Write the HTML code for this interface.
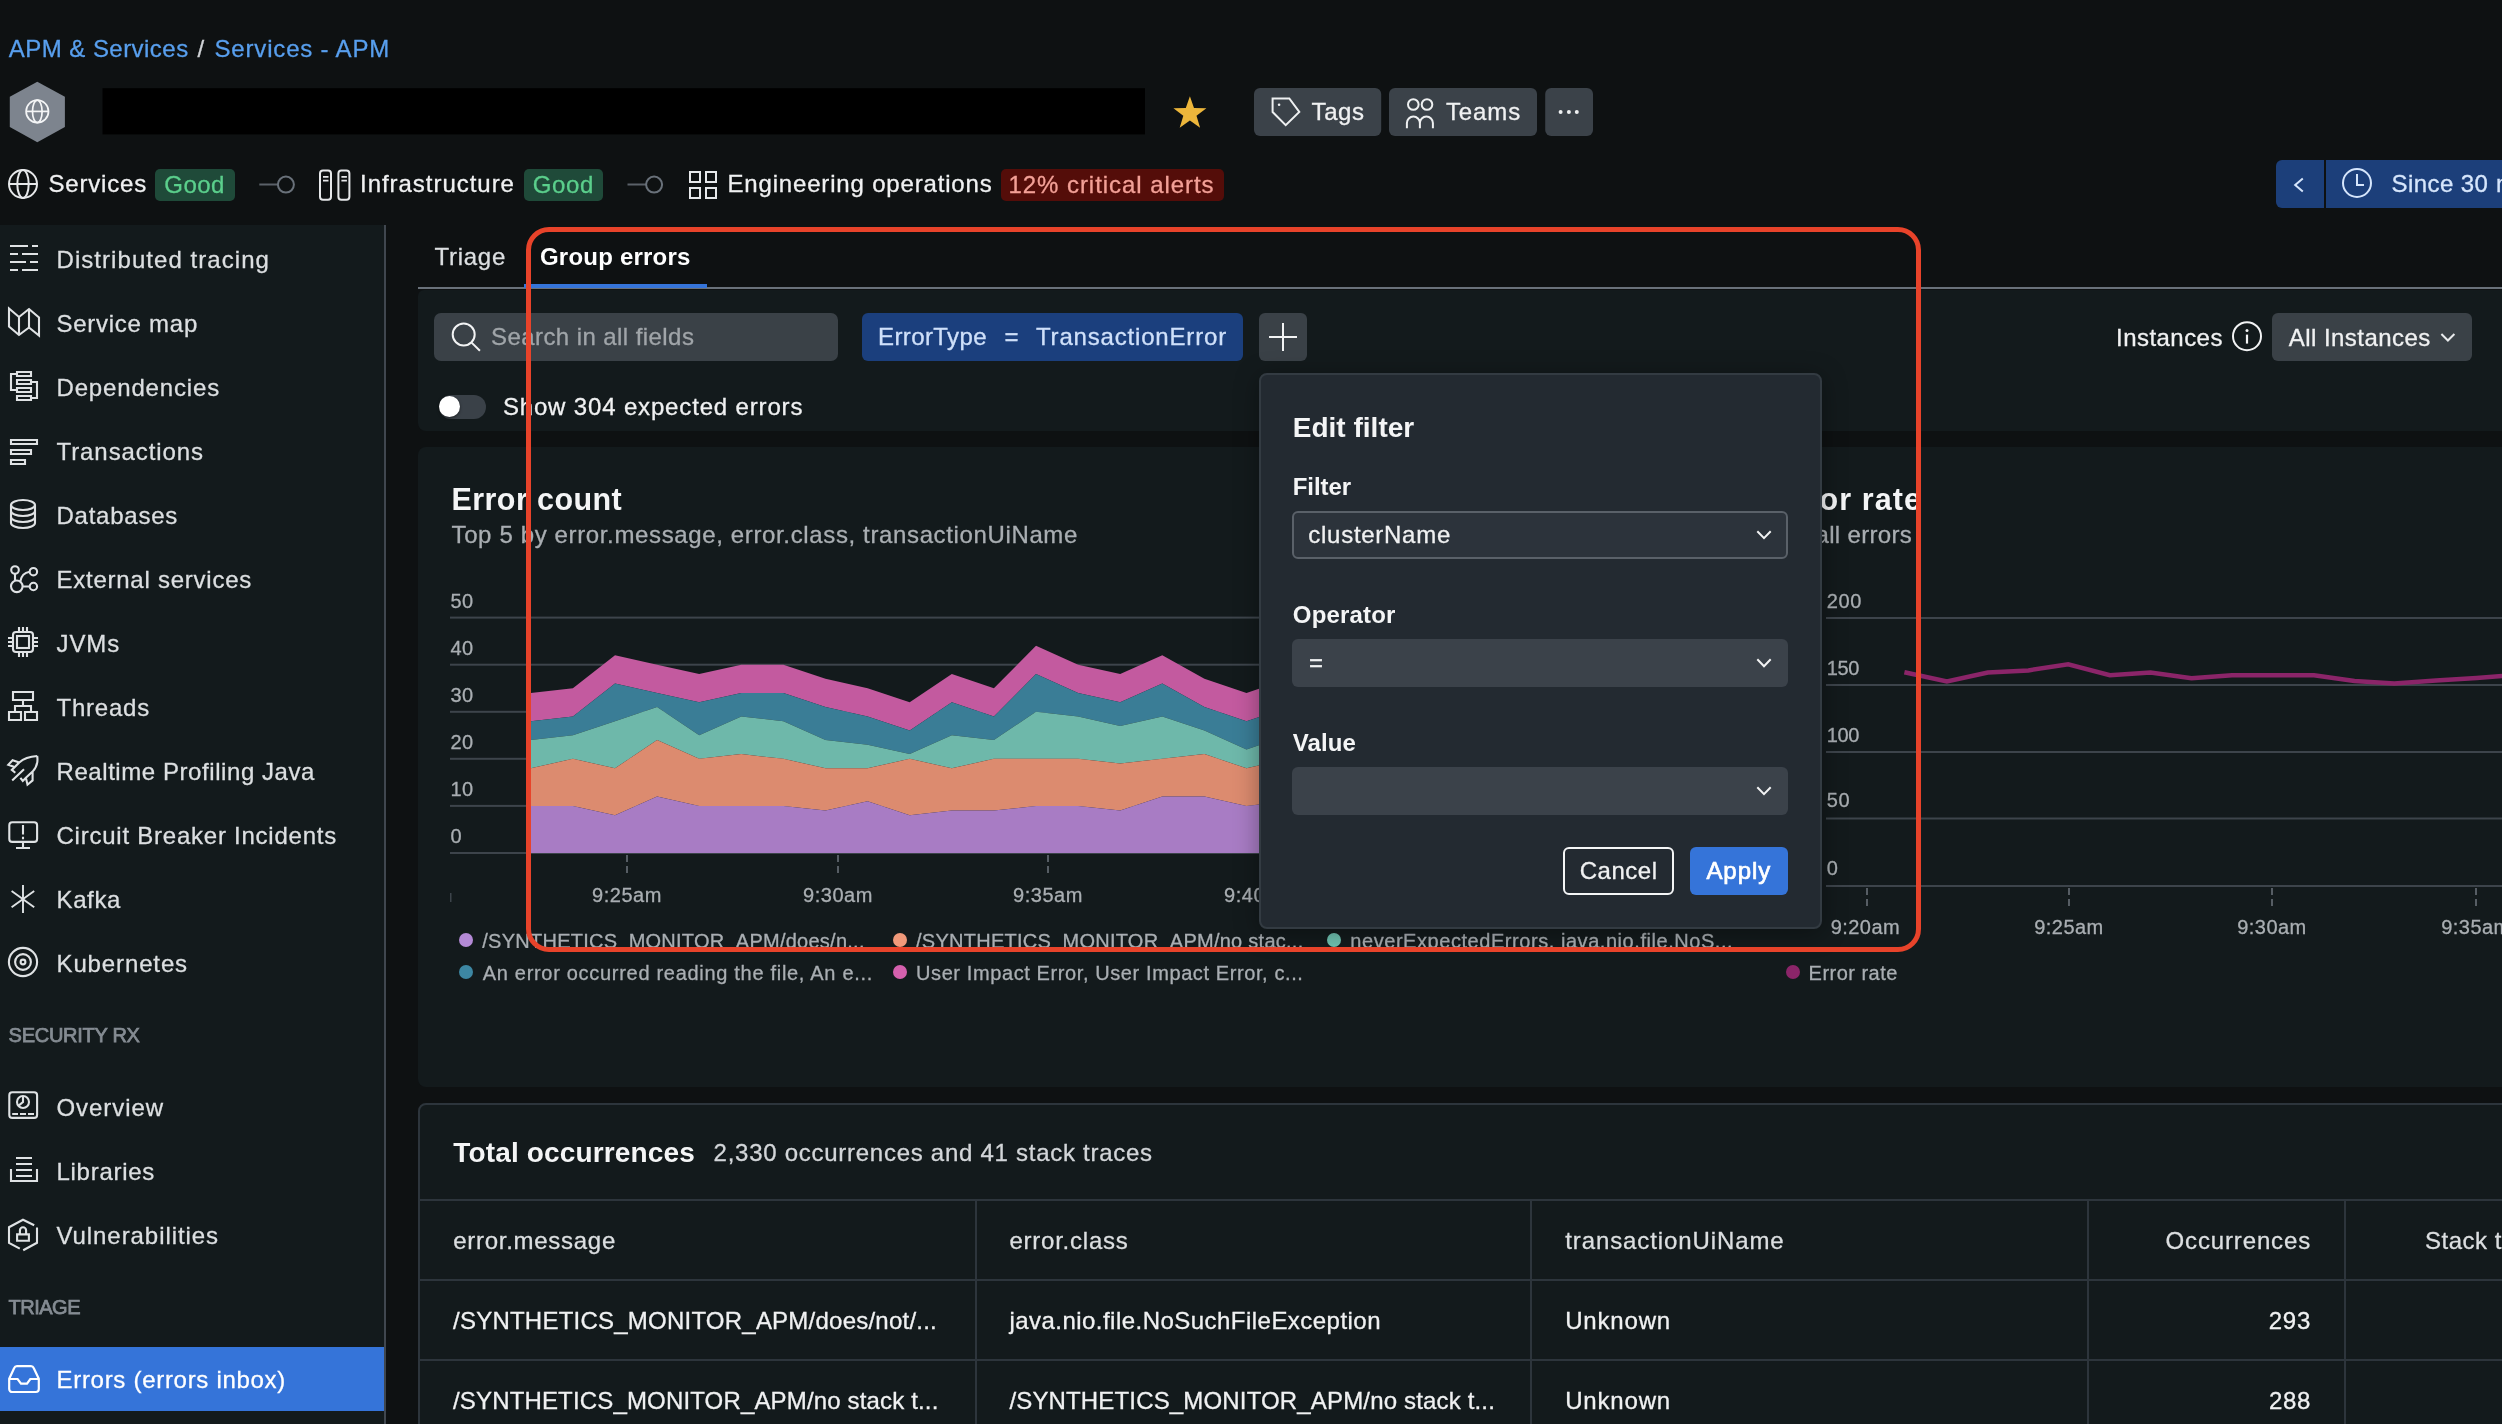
<!DOCTYPE html>
<html lang="en"><head><meta charset="utf-8"><title>Errors inbox - Group errors</title>
<style>
html,body{margin:0;padding:0;background:#0e1112;}
body{width:2502px;height:1424px;overflow:hidden;font-family:"Liberation Sans",sans-serif;}
#page{position:relative;width:2502px;height:1424px;overflow:hidden;background:#0e1112;}
.layer{position:absolute;left:0;top:0;width:2502px;height:1424px;overflow:hidden;will-change:transform;}
#Lmodal,#Ltop{pointer-events:none;}
.t{position:absolute;white-space:pre;display:block;-webkit-text-stroke:0.3px currentColor;-webkit-font-smoothing:antialiased;}
.b{position:absolute;box-sizing:border-box;}
svg{position:absolute;overflow:visible;}
.ic{fill:none;stroke:#e3e5e7;stroke-width:2;}

</style></head>
<body>
<div id="page">
<div class="layer" id="Lbase">
<!-- ===== header ===== -->
<svg style="left:0;top:70px" width="1620" height="80" viewBox="0 70 1620 80">
  <path d="M37.3 81.8 L64.9 96.7 V127 L37.3 142.2 L9.8 127 V96.7 Z" fill="#7d848e"/>
  <g fill="none" stroke="#f4f5f6" stroke-width="1.7"><circle cx="37.3" cy="111.4" r="11.2"/><ellipse cx="37.3" cy="111.4" rx="4.8" ry="11.2"/><path d="M26.1 111.4 H48.5"/></g>
  <rect x="102.5" y="88.2" width="1042.5" height="46.2" fill="#000"/>
  <polygon points="1189.9,96.2 1194.0,108.0 1206.4,108.2 1196.5,115.8 1200.1,127.7 1189.9,120.6 1179.7,127.7 1183.3,115.8 1173.4,108.2 1185.8,108.0" fill="#ecb63b"/>
  <rect x="1254" y="88" width="127.2" height="48" rx="6" fill="#3b4249"/>
  <rect x="1389" y="88" width="148" height="48" rx="6" fill="#3b4249"/>
  <rect x="1545.2" y="88" width="47.8" height="48" rx="6" fill="#3b4249"/>
  <g fill="none" stroke="#eef0f1" stroke-width="2">
    <path d="M1272.6 98.5 H1289.3 L1299.3 112 L1285.7 125.2 L1272.6 112 Z"/>
    <circle cx="1413.3" cy="104.5" r="5.3"/><circle cx="1427" cy="104.5" r="5.3"/>
    <path d="M1406.9 128.3 V123.1 a6.5 6.5 0 0 1 13 0 V128.3 M1419.9 123.1 a6.5 6.5 0 0 1 13 0 V128.3"/>
  </g>
  <g fill="#eef0f1"><circle cx="1279.1" cy="104.8" r="1.3"/><circle cx="1560.6" cy="112" r="2"/><circle cx="1568.9" cy="112" r="2"/><circle cx="1576.8" cy="112" r="2"/></g>
</svg>

<!-- status row -->
<svg style="left:0;top:150px" width="1260" height="70" viewBox="0 150 1260 70" fill="none" stroke="#e6e8ea" stroke-width="2">
  <circle cx="23" cy="184" r="14"/><ellipse cx="23" cy="184" rx="5.7" ry="14"/><path d="M9 184 H37"/>
  <g stroke="#5a6168"><path d="M259.3 184.6 H277.8 M627.5 184.6 H646"/></g>
  <g stroke="#69717a"><circle cx="285.9" cy="184.6" r="8"/><circle cx="654.1" cy="184.6" r="8"/></g>
  <rect x="320" y="170.4" width="11" height="29.3" rx="3"/><rect x="338.4" y="170.4" width="11" height="29.3" rx="3"/>
  <path d="M323 176.8 H328.5 M323 180.6 H328.5 M341.4 176.8 H346.9 M341.4 180.6 H346.9" stroke-width="1.7"/>
  <rect x="690" y="172" width="10" height="10"/><rect x="706" y="172" width="10" height="10"/><rect x="690" y="188" width="10" height="10"/><rect x="706" y="188" width="10" height="10"/>
</svg>
<div class="b" style="left:155px;top:169px;width:80px;height:32px;border-radius:5px;background:#1f4a39"></div>
<div class="b" style="left:524px;top:169px;width:79px;height:32px;border-radius:5px;background:#1f4a39"></div>
<div class="b" style="left:1001px;top:169px;width:223px;height:32px;border-radius:5px;background:#540d09"></div>

<!-- time picker -->
<div class="b" style="left:2276px;top:160px;width:48px;height:48px;border-radius:6px 0 0 6px;background:#1c3f7a"></div>
<div class="b" style="left:2326px;top:160px;width:180px;height:48px;background:#1c3f7a"></div>
<svg style="left:2270px;top:160px" width="232" height="48" viewBox="2270 160 232 48" fill="none" stroke="#d6e6fc" stroke-width="2"><path d="M2302.8 178.6 L2295.2 185 L2302.8 191.4"/><circle cx="2357" cy="183" r="14"/><path d="M2357 174 V185 H2364"/></svg>

<!-- ===== sidebar ===== -->
<div class="b" style="left:0;top:225px;width:384px;height:1200px;background:#131a1c"></div>
<div class="b" style="left:384px;top:225px;width:2px;height:1200px;background:#40474f"></div>
<div class="b" style="left:0;top:1347px;width:384px;height:64px;background:#3574d9"></div>
<svg style="left:0;top:0" width="400" height="1424" viewBox="0 0 400 1424" fill="none" stroke="#dfe2e4" stroke-width="2.1">
<!-- distributed tracing -->
<path d="M10 246 H28 M32 246 H38 M10 254 H18 M22 254 H38 M10 262 H26 M30 262 H38 M10 270 H18 M22 270 H38"/>
<!-- service map -->
<path d="M9 308.5 V326.5 L19 335 L29 327.5 L39 335.5 V317.5 L29 309 L19 317 Z M19 317 V335 M29 309 V327.5" stroke-linejoin="miter"/>
<!-- dependencies -->
<path d="M17 372 H31 V376 H17 Z M17 380 H31 V384 H17 Z M17 388 H31 V392 H17 Z M17 396 H31 V400 H17 Z M17 374 H11 V390 H17 M31 382 H37 V398 H31"/>
<!-- transactions -->
<path d="M11 440 H37 V444 H11 Z M11 450 H31 V454 H11 Z M11 460 H25 V464 H11 Z"/>
<!-- databases -->
<ellipse cx="23" cy="505" rx="12" ry="5"/>
<path d="M11 505 V523 a12 5 0 0 0 24 0 V505 M11 511 a12 5 0 0 0 24 0 M11 517 a12 5 0 0 0 24 0"/>
<!-- external services -->
<circle cx="15" cy="570" r="3.8"/><circle cx="16.8" cy="586.3" r="5.8"/><circle cx="33.4" cy="571.7" r="3.7"/><circle cx="33.4" cy="586.5" r="3.7"/>
<path d="M15 574 V580.5 M22.6 586.5 H29.7 M20.3 581.5 C21 576.5 24.5 572.5 29.7 571.7"/>
<!-- jvms -->
<rect x="13" y="632" width="20" height="20" rx="3"/><rect x="17" y="636" width="12" height="12"/>
<path d="M19 627 V632 M23 627 V632 M27 627 V632 M19 652 V657 M23 652 V657 M27 652 V657 M8 638 H13 M8 642 H13 M8 646 H13 M33 638 H38 M33 642 H38 M33 646 H38"/>
<!-- threads -->
<path d="M13 692 H33 V700 H13 Z M23 700 V706 M15 712 V706 H31 V712 M9 712 H21 V720 H9 Z M25 712 H37 V720 H25 Z"/>
<!-- realtime profiling (rocket) -->
<path d="M37.2 756 C29 756.5 23 759 19.3 762.4 L11.8 769.9 L15.3 772.8 M19.3 762.4 L12.6 760.2 L8.3 764.8 L13.8 766.7 M37.2 756 C38.3 763 36 768 32.6 771.6 L25.9 777.8 L22.8 781 L20.4 777.8 M32.6 771.6 V780.4 L27.5 784.7 L25.9 777.8 M24 769.2 L12.2 780.6"/>
<!-- circuit breaker -->
<rect x="9.3" y="822.3" width="27.8" height="19.6" rx="3"/>
<path d="M23 825 V834.5 M23 836.8 V839.2 M23 842 V848 M16 848 H30"/>
<!-- kafka -->
<path d="M23 885 V913 M11.6 891 L34.2 907.2 M34.2 891 L11.6 907.2" stroke-width="1.9"/>
<!-- kubernetes -->
<circle cx="23" cy="962" r="14.1"/><circle cx="23" cy="962" r="7.9"/><circle cx="23" cy="962" r="2.4"/>
<!-- overview -->
<rect x="9.3" y="1092.2" width="27.8" height="25.7" rx="3"/><circle cx="23" cy="1102" r="6"/>
<path d="M23 1096 V1102 L18.6 1105.6 M12.2 1114 H18 M20 1114 H26 M28 1114 H34"/>
<!-- libraries -->
<path d="M16 1158 H32 M16 1164 H32 M16 1170 H32 M16 1176 H32 M11 1169 V1181 H37 V1169"/>
<!-- vulnerabilities -->
<path d="M34.2 1225.2 L23 1219.8 L9 1227.2 V1242.8 L19.8 1248.7 M37 1227.5 V1242.8 L23.2 1250.2 M17.1 1234.4 H28.9 V1240.7 H17.1 Z M19.9 1234 V1230.4 a3.1 3.1 0 0 1 6.2 0 V1234"/>
<!-- errors inbox -->
<path d="M9.2 1378.8 L14.2 1368 a3 3 0 0 1 2.7 -1.8 H31 a3 3 0 0 1 2.7 1.8 L38.8 1378.8 V1389 a3 3 0 0 1 -3 3 H12.2 a3 3 0 0 1 -3 -3 Z M9.2 1379 H17.6 L21 1383.7 H27 L30.3 1379 H38.8" stroke="#ffffff" stroke-width="2.2"/>
</svg>


<!-- ===== main: tabs ===== -->
<div class="b" style="left:418px;top:287px;width:2090px;height:2px;background:#69717a"></div>
<div class="b" style="left:524px;top:284px;width:183px;height:4px;background:#3574d9"></div>

<!-- filter panel -->
<div class="b" style="left:418px;top:290px;width:2090px;height:141px;border-radius:6px 0 0 8px;background:#131a1c"></div>
<div class="b" style="left:434px;top:313px;width:404px;height:48px;border-radius:7px;background:#3a4147"></div>
<svg style="left:448px;top:320px" width="36" height="36" viewBox="448 320 36 36" fill="none" stroke="#f2f3f4" stroke-width="2"><circle cx="463.7" cy="334.5" r="11"/><path d="M471.6 342.6 L479.9 350.8"/></svg>
<div class="b" style="left:862px;top:313px;width:381px;height:48px;border-radius:6px;background:#1b3f7d"></div>
<div class="b" style="left:1259px;top:313px;width:48px;height:48px;border-radius:6px;background:#3a4147"></div>
<svg style="left:1265px;top:319px" width="36" height="36" viewBox="0 0 36 36"><path d="M18 4 V32 M4 18 H32" stroke="#f2f3f4" stroke-width="2" fill="none"/></svg>
<div class="b" style="left:439px;top:395px;width:47px;height:24px;border-radius:12px;background:#3a4148"></div>
<div class="b" style="left:439.2px;top:396.4px;width:21px;height:21px;border-radius:11px;background:#fff;box-shadow:0 1px 3px rgba(0,0,0,.5)"></div>
<svg style="left:2230px;top:319px" width="34" height="34" viewBox="2230 319 34 34"><circle cx="2247" cy="336.2" r="14" fill="none" stroke="#f2f3f4" stroke-width="2"/><path d="M2247 334.6 V343.6" stroke="#f2f3f4" stroke-width="2.2"/><circle cx="2247" cy="330.6" r="1.5" fill="#f2f3f4"/></svg>
<div class="b" style="left:2272px;top:313px;width:200px;height:48px;border-radius:6px;background:#3a4147"></div>
<svg style="left:2436px;top:328px" width="24" height="18" viewBox="2436 328 24 18"><path d="M2441.4 334 L2447.9 340.5 L2454.4 334" fill="none" stroke="#e8eaec" stroke-width="2"/></svg>

<!-- chart panel -->
<div class="b" style="left:418px;top:447px;width:2090px;height:640px;border-radius:8px 0 0 8px;background:#131a1c"></div>
<svg style="left:0;top:0" width="2502" height="1424" viewBox="0 0 2502 1424">
<rect x="450" y="852.0" width="1330" height="2" fill="#3d444b"/>
<rect x="450" y="804.9" width="1330" height="2" fill="#3d444b"/>
<rect x="450" y="757.8" width="1330" height="2" fill="#3d444b"/>
<rect x="450" y="710.8" width="1330" height="2" fill="#3d444b"/>
<rect x="450" y="663.7" width="1330" height="2" fill="#3d444b"/>
<rect x="450" y="616.6" width="1330" height="2" fill="#3d444b"/>
<polygon points="530.8,692.9 572.9,688.2 615.0,655.3 657.1,664.7 699.2,674.1 741.3,664.7 783.4,664.7 825.5,678.8 867.6,688.2 909.7,702.3 951.8,674.1 993.9,688.2 1036.0,645.8 1078.1,664.7 1120.2,674.1 1162.3,655.3 1204.4,678.8 1246.5,692.9 1288.6,678.8 1330.7,674.1 1372.8,683.5 1372.8,711.8 1330.7,702.3 1288.6,707.1 1246.5,721.2 1204.4,707.1 1162.3,683.5 1120.2,702.3 1078.1,692.9 1036.0,674.1 993.9,716.5 951.8,702.3 909.7,730.6 867.6,716.5 825.5,707.1 783.4,692.9 741.3,692.9 699.2,702.3 657.1,692.9 615.0,683.5 572.9,716.5 530.8,721.2" fill="#c35a9f"/>
<polygon points="530.8,721.2 572.9,716.5 615.0,683.5 657.1,692.9 699.2,702.3 741.3,692.9 783.4,692.9 825.5,707.1 867.6,716.5 909.7,730.6 951.8,702.3 993.9,716.5 1036.0,674.1 1078.1,692.9 1120.2,702.3 1162.3,683.5 1204.4,707.1 1246.5,721.2 1288.6,707.1 1330.7,702.3 1372.8,711.8 1372.8,740.0 1330.7,730.6 1288.6,735.3 1246.5,749.4 1204.4,730.6 1162.3,716.5 1120.2,725.9 1078.1,716.5 1036.0,711.8 993.9,740.0 951.8,735.3 909.7,754.1 867.6,744.7 825.5,740.0 783.4,721.2 741.3,716.5 699.2,735.3 657.1,707.1 615.0,721.2 572.9,735.3 530.8,740.0" fill="#3a7d96"/>
<polygon points="530.8,740.0 572.9,735.3 615.0,721.2 657.1,707.1 699.2,735.3 741.3,716.5 783.4,721.2 825.5,740.0 867.6,744.7 909.7,754.1 951.8,735.3 993.9,740.0 1036.0,711.8 1078.1,716.5 1120.2,725.9 1162.3,716.5 1204.4,730.6 1246.5,749.4 1288.6,735.3 1330.7,730.6 1372.8,740.0 1372.8,758.8 1330.7,763.5 1288.6,758.8 1246.5,768.3 1204.4,754.1 1162.3,758.8 1120.2,763.5 1078.1,758.8 1036.0,758.8 993.9,758.8 951.8,768.3 909.7,758.8 867.6,768.3 825.5,768.3 783.4,758.8 741.3,754.1 699.2,758.8 657.1,740.0 615.0,768.3 572.9,758.8 530.8,768.3" fill="#6eb8aa"/>
<polygon points="530.8,768.3 572.9,758.8 615.0,768.3 657.1,740.0 699.2,758.8 741.3,754.1 783.4,758.8 825.5,768.3 867.6,768.3 909.7,758.8 951.8,768.3 993.9,758.8 1036.0,758.8 1078.1,758.8 1120.2,763.5 1162.3,758.8 1204.4,754.1 1246.5,768.3 1288.6,758.8 1330.7,763.5 1372.8,758.8 1372.8,810.6 1330.7,805.9 1288.6,801.2 1246.5,805.9 1204.4,796.5 1162.3,796.5 1120.2,810.6 1078.1,805.9 1036.0,805.9 993.9,810.6 951.8,810.6 909.7,815.3 867.6,801.2 825.5,810.6 783.4,805.9 741.3,805.9 699.2,805.9 657.1,796.5 615.0,815.3 572.9,805.9 530.8,805.9" fill="#dc8b6f"/>
<polygon points="530.8,805.9 572.9,805.9 615.0,815.3 657.1,796.5 699.2,805.9 741.3,805.9 783.4,805.9 825.5,810.6 867.6,801.2 909.7,815.3 951.8,810.6 993.9,810.6 1036.0,805.9 1078.1,805.9 1120.2,810.6 1162.3,796.5 1204.4,796.5 1246.5,805.9 1288.6,801.2 1330.7,805.9 1372.8,810.6 1372.8,853.0 1330.7,853.0 1288.6,853.0 1246.5,853.0 1204.4,853.0 1162.3,853.0 1120.2,853.0 1078.1,853.0 1036.0,853.0 993.9,853.0 951.8,853.0 909.7,853.0 867.6,853.0 825.5,853.0 783.4,853.0 741.3,853.0 699.2,853.0 657.1,853.0 615.0,853.0 572.9,853.0 530.8,853.0" fill="#a87cc4"/>
<path d="M627 855 V876" stroke="#565d64" stroke-width="2" stroke-dasharray="7 4" fill="none"/>
<path d="M838 855 V876" stroke="#565d64" stroke-width="2" stroke-dasharray="7 4" fill="none"/>
<path d="M1048 855 V876" stroke="#565d64" stroke-width="2" stroke-dasharray="7 4" fill="none"/>
<rect x="450" y="893" width="1.5" height="9" fill="#3d444b"/>
<circle cx="466" cy="940" r="7" fill="#b48ad6"/>
<circle cx="900" cy="940" r="7" fill="#f0997a"/>
<circle cx="1334" cy="940" r="7" fill="#6fc2b1"/>
<circle cx="466" cy="972" r="7" fill="#3d87a3"/>
<circle cx="900" cy="972" r="7" fill="#d460ad"/>
<rect x="1826" y="617" width="700" height="2" fill="#3d444b"/>
<rect x="1826" y="684" width="700" height="2" fill="#3d444b"/>
<rect x="1826" y="751" width="700" height="2" fill="#3d444b"/>
<rect x="1826" y="817.5" width="700" height="2" fill="#3d444b"/>
<rect x="1826" y="885" width="700" height="2" fill="#3d444b"/>
<path d="M1867 888 V909" stroke="#565d64" stroke-width="2" stroke-dasharray="7 4" fill="none"/>
<path d="M2069 888 V909" stroke="#565d64" stroke-width="2" stroke-dasharray="7 4" fill="none"/>
<path d="M2272 888 V909" stroke="#565d64" stroke-width="2" stroke-dasharray="7 4" fill="none"/>
<path d="M2476 888 V909" stroke="#565d64" stroke-width="2" stroke-dasharray="7 4" fill="none"/>
<polyline points="1904.4,672.2 1946.9,681.4 1987.8,672.6 2028.4,670.4 2068.2,664.3 2109.9,675.3 2150.5,672.6 2191.5,678.3 2232,675.3 2273,675.3 2314,675.3 2354.5,681 2394.3,683.6 2436,680.6 2476.6,677.9 2517,675" fill="none" stroke="#8b2569" stroke-width="4.5" stroke-linejoin="miter"/>
<circle cx="1793" cy="972" r="7" fill="#8b2569"/>
</svg>

<!-- table panel -->
<div class="b" style="left:418px;top:1103px;width:2090px;height:340px;border-radius:8px 0 0 0;background:#131a1c;border:2px solid #2d353c"></div>
<div class="b" style="left:420px;top:1199px;width:2090px;height:2px;background:#2d353c"></div>
<div class="b" style="left:420px;top:1279px;width:2090px;height:2px;background:#2d353c"></div>
<div class="b" style="left:420px;top:1359px;width:2090px;height:2px;background:#2d353c"></div>
<div class="b" style="left:975px;top:1200px;width:2px;height:230px;background:#2d353c"></div>
<div class="b" style="left:1530px;top:1200px;width:2px;height:230px;background:#2d353c"></div>
<div class="b" style="left:2087px;top:1200px;width:2px;height:230px;background:#2d353c"></div>
<div class="b" style="left:2344px;top:1200px;width:2px;height:230px;background:#2d353c"></div>

<span class="t" id="t0" style="left:8.8px;top:35px;font-size:24px;line-height:27px;color:#589fee;letter-spacing:0.458px;">APM &amp; Services</span>
<span class="t" id="t1" style="left:197.4px;top:35px;font-size:24px;line-height:27px;color:#d0d3d6;letter-spacing:0.928px;">/</span>
<span class="t" id="t2" style="left:214.5px;top:35px;font-size:24px;line-height:27px;color:#589fee;letter-spacing:0.825px;">Services - APM</span>
<span class="t" id="t3" style="left:1311.6px;top:98px;font-size:24px;line-height:27px;color:#f0f1f2;letter-spacing:0.549px;">Tags</span>
<span class="t" id="t4" style="left:1446px;top:98px;font-size:24px;line-height:27px;color:#f0f1f2;letter-spacing:0.863px;">Teams</span>
<span class="t" id="t5" style="left:48.5px;top:170px;font-size:24px;line-height:27px;color:#f0f1f2;letter-spacing:0.809px;">Services</span>
<span class="t" id="t6" style="left:164.2px;top:171px;font-size:24px;line-height:27px;color:#5bcf8c;letter-spacing:0.520px;">Good</span>
<span class="t" id="t7" style="left:360px;top:170px;font-size:24px;line-height:27px;color:#f0f1f2;letter-spacing:0.965px;">Infrastructure</span>
<span class="t" id="t8" style="left:532.8px;top:171px;font-size:24px;line-height:27px;color:#5bcf8c;letter-spacing:0.595px;">Good</span>
<span class="t" id="t9" style="left:727.5px;top:170px;font-size:24px;line-height:27px;color:#f0f1f2;letter-spacing:0.825px;">Engineering operations</span>
<span class="t" id="t10" style="left:1008.5px;top:171px;font-size:24px;line-height:27px;color:#f3a097;letter-spacing:0.944px;">12% critical alerts</span>
<span class="t" id="t11" style="left:2391.5px;top:170px;font-size:24px;line-height:27px;color:#d6e6fc;letter-spacing:0.437px;">Since 30</span>
<span class="t" id="t12" style="left:2496px;top:170px;font-size:24px;line-height:27px;color:#d6e6fc;letter-spacing:0.900px;">minutes ago</span>
<span class="t" id="t13" style="left:56.5px;top:246px;font-size:24px;line-height:27px;color:#dcdfe1;letter-spacing:1.057px;">Distributed tracing</span>
<span class="t" id="t14" style="left:56.5px;top:310px;font-size:24px;line-height:27px;color:#dcdfe1;letter-spacing:0.737px;">Service map</span>
<span class="t" id="t15" style="left:56.5px;top:374px;font-size:24px;line-height:27px;color:#dcdfe1;letter-spacing:0.837px;">Dependencies</span>
<span class="t" id="t16" style="left:56.5px;top:438px;font-size:24px;line-height:27px;color:#dcdfe1;letter-spacing:0.917px;">Transactions</span>
<span class="t" id="t17" style="left:56.5px;top:502px;font-size:24px;line-height:27px;color:#dcdfe1;letter-spacing:0.750px;">Databases</span>
<span class="t" id="t18" style="left:56.5px;top:566px;font-size:24px;line-height:27px;color:#dcdfe1;letter-spacing:0.751px;">External services</span>
<span class="t" id="t19" style="left:56.5px;top:630px;font-size:24px;line-height:27px;color:#dcdfe1;letter-spacing:0.875px;">JVMs</span>
<span class="t" id="t20" style="left:56.5px;top:694px;font-size:24px;line-height:27px;color:#dcdfe1;letter-spacing:0.779px;">Threads</span>
<span class="t" id="t21" style="left:56.5px;top:758px;font-size:24px;line-height:27px;color:#dcdfe1;letter-spacing:0.568px;">Realtime Profiling Java</span>
<span class="t" id="t22" style="left:56.5px;top:822px;font-size:24px;line-height:27px;color:#dcdfe1;letter-spacing:0.762px;">Circuit Breaker Incidents</span>
<span class="t" id="t23" style="left:56.5px;top:886px;font-size:24px;line-height:27px;color:#dcdfe1;letter-spacing:0.625px;">Kafka</span>
<span class="t" id="t24" style="left:56.5px;top:950px;font-size:24px;line-height:27px;color:#dcdfe1;letter-spacing:0.873px;">Kubernetes</span>
<span class="t" id="t25" style="left:56.5px;top:1094px;font-size:24px;line-height:27px;color:#dcdfe1;letter-spacing:0.934px;">Overview</span>
<span class="t" id="t26" style="left:56.5px;top:1158px;font-size:24px;line-height:27px;color:#dcdfe1;letter-spacing:0.717px;">Libraries</span>
<span class="t" id="t27" style="left:56.5px;top:1222px;font-size:24px;line-height:27px;color:#dcdfe1;letter-spacing:0.931px;">Vulnerabilities</span>
<span class="t" id="t28" style="left:8.6px;top:1024px;font-size:20px;line-height:22px;color:#858c93;letter-spacing:-0.274px;-webkit-text-stroke-width:0.75px;">SECURITY RX</span>
<span class="t" id="t29" style="left:8.6px;top:1296px;font-size:20px;line-height:22px;color:#858c93;letter-spacing:-0.509px;-webkit-text-stroke-width:0.75px;">TRIAGE</span>
<span class="t" id="t30" style="left:56.5px;top:1366px;font-size:24px;line-height:27px;color:#ffffff;letter-spacing:0.705px;">Errors (errors inbox)</span>
<span class="t" id="t31" style="left:434.5px;top:243px;font-size:24px;line-height:27px;color:#dcdfe1;letter-spacing:0.727px;">Triage</span>
<span class="t" id="t32" style="left:540px;top:243px;font-size:24px;line-height:27px;color:#ffffff;font-weight:700;-webkit-text-stroke-width:0;letter-spacing:0.206px;">Group errors</span>
<span class="t" id="t33" style="left:491px;top:323px;font-size:24px;line-height:27px;color:#a0a5a9;letter-spacing:0.427px;">Search in all fields</span>
<span class="t" id="t34" style="left:878px;top:323px;font-size:24px;line-height:27px;color:#cfe0fa;letter-spacing:0.403px;">ErrorType</span>
<span class="t" id="t35" style="left:1004.5px;top:323px;font-size:24px;line-height:27px;color:#cfe0fa;letter-spacing:0.000px;">=</span>
<span class="t" id="t36" style="left:1036px;top:323px;font-size:24px;line-height:27px;color:#cfe0fa;letter-spacing:0.822px;">TransactionError</span>
<span class="t" id="t37" style="left:502.9px;top:393px;font-size:24px;line-height:27px;color:#f0f1f2;letter-spacing:0.843px;">Show 304 expected errors</span>
<span class="t" id="t38" style="left:2116px;top:324px;font-size:24px;line-height:27px;color:#f0f1f2;letter-spacing:0.463px;">Instances</span>
<span class="t" id="t39" style="left:2288.8px;top:324px;font-size:24px;line-height:27px;color:#f0f1f2;letter-spacing:0.448px;">All Instances</span>
<span class="t" id="t40" style="left:451.5px;top:482px;font-size:30.5px;line-height:34px;color:#f4f5f6;font-weight:700;-webkit-text-stroke-width:0;letter-spacing:0.420px;">Error count</span>
<span class="t" id="t41" style="left:451.5px;top:521px;font-size:24px;line-height:27px;color:#a9aeb2;letter-spacing:0.634px;">Top 5 by error.message, error.class, transactionUiName</span>
<span class="t" id="t42" style="left:450.6px;top:590px;font-size:20px;line-height:22px;color:#a9aeb2;letter-spacing:0.375px;">50</span>
<span class="t" id="t43" style="left:450.6px;top:637px;font-size:20px;line-height:22px;color:#a9aeb2;letter-spacing:0.375px;">40</span>
<span class="t" id="t44" style="left:450.6px;top:684px;font-size:20px;line-height:22px;color:#a9aeb2;letter-spacing:0.375px;">30</span>
<span class="t" id="t45" style="left:450.6px;top:731px;font-size:20px;line-height:22px;color:#a9aeb2;letter-spacing:0.375px;">20</span>
<span class="t" id="t46" style="left:450.6px;top:778px;font-size:20px;line-height:22px;color:#a9aeb2;letter-spacing:0.375px;">10</span>
<span class="t" id="t47" style="left:450.6px;top:825px;font-size:20px;line-height:22px;color:#a9aeb2;letter-spacing:0.375px;">0</span>
<span class="t" id="t48" style="left:592px;top:884px;font-size:20px;line-height:22px;color:#a9aeb2;letter-spacing:0.547px;">9:25am</span>
<span class="t" id="t49" style="left:803px;top:884px;font-size:20px;line-height:22px;color:#a9aeb2;letter-spacing:0.547px;">9:30am</span>
<span class="t" id="t50" style="left:1013px;top:884px;font-size:20px;line-height:22px;color:#a9aeb2;letter-spacing:0.547px;">9:35am</span>
<span class="t" id="t51" style="left:1224px;top:884px;font-size:20px;line-height:22px;color:#a9aeb2;letter-spacing:0.547px;">9:40am</span>
<span class="t" id="t52" style="left:482.3px;top:930px;font-size:20px;line-height:22px;color:#a9aeb2;letter-spacing:0.249px;height:18px;overflow:hidden;">/SYNTHETICS_MONITOR_APM/does/n...</span>
<span class="t" id="t53" style="left:916px;top:930px;font-size:20px;line-height:22px;color:#a9aeb2;letter-spacing:0.261px;height:18px;overflow:hidden;">/SYNTHETICS_MONITOR_APM/no stac...</span>
<span class="t" id="t54" style="left:1350.3px;top:930px;font-size:20px;line-height:22px;color:#a9aeb2;letter-spacing:0.554px;height:18px;overflow:hidden;">neverExpectedErrors, java.nio.file.NoS...</span>
<span class="t" id="t55" style="left:482.7px;top:962px;font-size:20px;line-height:22px;color:#a9aeb2;letter-spacing:0.700px;">An error occurred reading the file, An e...</span>
<span class="t" id="t56" style="left:916px;top:962px;font-size:20px;line-height:22px;color:#a9aeb2;letter-spacing:0.600px;">User Impact Error, User Impact Error, c...</span>
<span class="t" id="t57" style="left:1771px;top:482px;font-size:30.5px;line-height:34px;color:#f4f5f6;font-weight:700;-webkit-text-stroke-width:0;letter-spacing:0.969px;">Err</span>
<span class="t" id="t58" style="left:1819.5px;top:482px;font-size:30.5px;line-height:34px;color:#f4f5f6;font-weight:700;-webkit-text-stroke-width:0;letter-spacing:1.080px;width:96.5px;overflow:hidden;">or rate</span>
<span class="t" id="t59" style="left:1736px;top:521px;font-size:24px;line-height:27px;color:#a9aeb2;letter-spacing:-0.227px;">Across</span>
<span class="t" id="t60" style="left:1815.5px;top:521px;font-size:24px;line-height:27px;color:#a9aeb2;letter-spacing:0.334px;">all errors</span>
<span class="t" id="t61" style="left:1826.7px;top:590px;font-size:20px;line-height:22px;color:#a9aeb2;letter-spacing:0.675px;">200</span>
<span class="t" id="t62" style="left:1826.7px;top:657px;font-size:20px;line-height:22px;color:#a9aeb2;letter-spacing:-0.325px;">150</span>
<span class="t" id="t63" style="left:1826.7px;top:724px;font-size:20px;line-height:22px;color:#a9aeb2;letter-spacing:-0.392px;">100</span>
<span class="t" id="t64" style="left:1826.7px;top:789px;font-size:20px;line-height:22px;color:#a9aeb2;letter-spacing:0.675px;">50</span>
<span class="t" id="t65" style="left:1826.7px;top:857px;font-size:20px;line-height:22px;color:#a9aeb2;letter-spacing:0.175px;">0</span>
<span class="t" id="t66" style="left:1830.7px;top:916px;font-size:20px;line-height:22px;color:#a9aeb2;letter-spacing:0.447px;">9:20am</span>
<span class="t" id="t67" style="left:2034.3px;top:916px;font-size:20px;line-height:22px;color:#a9aeb2;letter-spacing:0.447px;">9:25am</span>
<span class="t" id="t68" style="left:2237.3px;top:916px;font-size:20px;line-height:22px;color:#a9aeb2;letter-spacing:0.447px;">9:30am</span>
<span class="t" id="t69" style="left:2441.3px;top:916px;font-size:20px;line-height:22px;color:#a9aeb2;letter-spacing:0.447px;">9:35am</span>
<span class="t" id="t70" style="left:1808.6px;top:962px;font-size:20px;line-height:22px;color:#a9aeb2;letter-spacing:0.473px;">Error rate</span>
<span class="t" id="t79" style="left:453.3px;top:1137px;font-size:28px;line-height:31px;color:#f4f5f6;font-weight:700;-webkit-text-stroke-width:0;letter-spacing:0.151px;">Total occurrences</span>
<span class="t" id="t80" style="left:713.6px;top:1139px;font-size:24px;line-height:27px;color:#d3d6d9;letter-spacing:0.729px;">2,330 occurrences and 41 stack traces</span>
<span class="t" id="t81" style="left:453.3px;top:1227px;font-size:24px;line-height:27px;color:#dcdfe1;letter-spacing:0.715px;">error.message</span>
<span class="t" id="t82" style="left:1009.4px;top:1227px;font-size:24px;line-height:27px;color:#dcdfe1;letter-spacing:0.772px;">error.class</span>
<span class="t" id="t83" style="left:1565.2px;top:1227px;font-size:24px;line-height:27px;color:#dcdfe1;letter-spacing:0.900px;">transactionUiName</span>
<span class="t" id="t84" style="left:2165.6px;top:1227px;font-size:24px;line-height:27px;color:#dcdfe1;letter-spacing:0.850px;">Occurrences</span>
<span class="t" id="t85" style="left:2425px;top:1227px;font-size:24px;line-height:27px;color:#dcdfe1;letter-spacing:0.520px;">Stack t</span>
<span class="t" id="t86" style="left:2503px;top:1227px;font-size:24px;line-height:27px;color:#dcdfe1;letter-spacing:1.000px;">races</span>
<span class="t" id="t87" style="left:453px;top:1307px;font-size:24px;line-height:27px;color:#f0f1f2;letter-spacing:0.231px;">/SYNTHETICS_MONITOR_APM/does/not/...</span>
<span class="t" id="t88" style="left:1009.4px;top:1307px;font-size:24px;line-height:27px;color:#f0f1f2;letter-spacing:0.467px;">java.nio.file.NoSuchFileException</span>
<span class="t" id="t89" style="left:1565.2px;top:1307px;font-size:24px;line-height:27px;color:#f0f1f2;letter-spacing:0.820px;">Unknown</span>
<span class="t" id="t90" style="left:2268.7px;top:1307px;font-size:24px;line-height:27px;color:#f0f1f2;letter-spacing:0.751px;">293</span>
<span class="t" id="t91" style="left:453px;top:1387px;font-size:24px;line-height:27px;color:#f0f1f2;letter-spacing:0.158px;">/SYNTHETICS_MONITOR_APM/no stack t...</span>
<span class="t" id="t92" style="left:1009.4px;top:1387px;font-size:24px;line-height:27px;color:#f0f1f2;letter-spacing:0.160px;">/SYNTHETICS_MONITOR_APM/no stack t...</span>
<span class="t" id="t93" style="left:1565.2px;top:1387px;font-size:24px;line-height:27px;color:#f0f1f2;letter-spacing:0.820px;">Unknown</span>
<span class="t" id="t94" style="left:2269px;top:1387px;font-size:24px;line-height:27px;color:#f0f1f2;letter-spacing:0.651px;">288</span>
</div>
<div class="layer" id="Lmodal">
<div class="b" style="left:1258.5px;top:373px;width:563.5px;height:555.5px;border-radius:8px;background:#232a31;border:2px solid #333b42;box-shadow:0 4px 24px rgba(0,0,0,.35)"></div>
<div class="b" style="left:1292px;top:511px;width:496px;height:48px;border-radius:6px;background:#2c333b;border:2px solid #5a6169"></div>
<div class="b" style="left:1292px;top:639px;width:496px;height:48px;border-radius:6px;background:#3b424a"></div>
<div class="b" style="left:1292px;top:767px;width:496px;height:48px;border-radius:6px;background:#3b424a"></div>
<svg style="left:1750px;top:524px" width="28" height="22" viewBox="1750 524 28 22"><path d="M1757.3 531.2 L1764 538.1 L1770.7 531.2" fill="none" stroke="#f2f3f4" stroke-width="2"/></svg>
<svg style="left:1750px;top:652px" width="28" height="22" viewBox="1750 652 28 22"><path d="M1757.3 659.3 L1764 666.2 L1770.7 659.3" fill="none" stroke="#f2f3f4" stroke-width="2"/></svg>
<svg style="left:1750px;top:780px" width="28" height="22" viewBox="1750 780 28 22"><path d="M1757.3 787.2 L1764 794.1 L1770.7 787.2" fill="none" stroke="#f2f3f4" stroke-width="2"/></svg>
<div class="b" style="left:1563px;top:847px;width:111px;height:48px;border-radius:6px;border:2px solid #f4f5f6"></div>
<div class="b" style="left:1690px;top:847px;width:98px;height:48px;border-radius:6px;background:#3574d9"></div>

<span class="t" id="t71" style="left:1292.8px;top:412px;font-size:28px;line-height:31px;color:#f4f5f6;font-weight:700;-webkit-text-stroke-width:0;letter-spacing:0.005px;">Edit filter</span>
<span class="t" id="t72" style="left:1292.8px;top:473px;font-size:24px;line-height:27px;color:#f4f5f6;font-weight:700;-webkit-text-stroke-width:0;letter-spacing:-0.098px;">Filter</span>
<span class="t" id="t73" style="left:1308.3px;top:521px;font-size:24px;line-height:27px;color:#f0f1f2;letter-spacing:0.726px;">clusterName</span>
<span class="t" id="t74" style="left:1292.8px;top:601px;font-size:24px;line-height:27px;color:#f4f5f6;font-weight:700;-webkit-text-stroke-width:0;letter-spacing:0.168px;">Operator</span>
<span class="t" id="t75" style="left:1309px;top:649px;font-size:24px;line-height:27px;color:#f0f1f2;letter-spacing:0.000px;">=</span>
<span class="t" id="t76" style="left:1292.8px;top:729px;font-size:24px;line-height:27px;color:#f4f5f6;font-weight:700;-webkit-text-stroke-width:0;letter-spacing:0.116px;">Value</span>
<span class="t" id="t77" style="left:1579.7px;top:857px;font-size:24px;line-height:27px;color:#f0f1f2;letter-spacing:0.514px;">Cancel</span>
<span class="t" id="t78" style="left:1706.4px;top:857px;font-size:24px;line-height:27px;color:#ffffff;letter-spacing:0.951px;-webkit-text-stroke-width:0.7px;">Apply</span>
</div>
<div class="layer" id="Ltop">
<div class="b" style="left:526px;top:227px;width:1395px;height:725px;border-radius:23px;border:5px solid #e8432a"></div>


</div>
</div>
</body></html>
